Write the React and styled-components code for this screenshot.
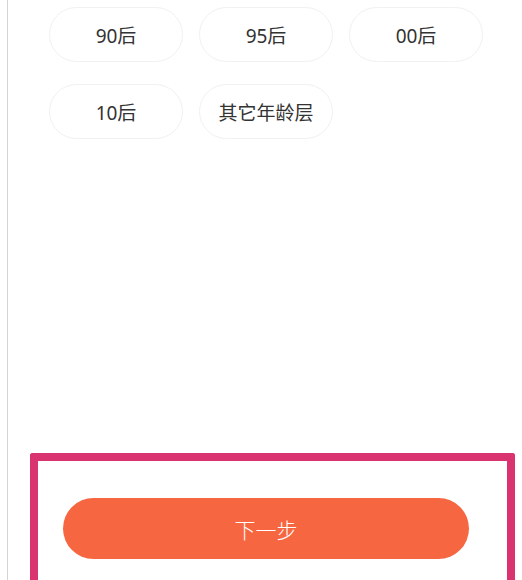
import React from "react";
import styled, { createGlobalStyle } from "styled-components";

const Global = createGlobalStyle`
  html, body { margin: 0; padding: 0; background: #ffffff; }
  body { font-family: "Noto Sans", "Noto Sans CJK SC", sans-serif; overflow: hidden; }
`;

const Page = styled.div`
  width: 522px;
  height: 580px;
  padding-left: 7px;
  box-sizing: border-box;
  overflow: hidden;
`;

const Panel = styled.div`
  height: 100%;
  border-left: 1px solid #d4d4d4;
  display: flex;
  flex-direction: column;
`;

const ChipGrid = styled.div`
  display: grid;
  grid-template-columns: repeat(3, 134px);
  column-gap: 16px;
  row-gap: 22px;
  padding: 7px 0 0 41px;
`;

const Chip = styled.button`
  height: 55px;
  border: 1px solid #f1f1f1;
  border-radius: 28px;
  background: #ffffff;
  color: #333333;
  font-family: "Noto Sans", "Noto Sans CJK SC", sans-serif;
  font-size: 19px;
  padding: 0;
  display: flex;
  align-items: center;
  justify-content: center;
`;

const Footer = styled.div`
  margin-top: auto;
  margin-left: 22px;
  width: 485px;
  height: 127px;
  box-sizing: border-box;
  border: 8px solid #d9346f;
  border-bottom: none;
  border-radius: 3px 3px 0 0;
  padding: 37px 0 0 25px;
  flex-shrink: 0;
`;

const NextButton = styled.button`
  width: 406px;
  height: 61px;
  border: none;
  border-radius: 31px;
  background: #f66641;
  color: #ffffff;
  font-family: "Noto Sans", "Noto Sans CJK SC", sans-serif;
  font-size: 21px;
  font-weight: 300;
  display: flex;
  align-items: center;
  justify-content: center;
  padding: 0;
`;

const ages = ["90后", "95后", "00后", "10后", "其它年龄层"];

export default function App() {
  return (
    <>
      <Global />
      <Page>
        <Panel>
          <ChipGrid>
            {ages.map((a) => (
              <Chip key={a}>{a}</Chip>
            ))}
          </ChipGrid>
          <Footer>
            <NextButton>下一步</NextButton>
          </Footer>
        </Panel>
      </Page>
    </>
  );
}
